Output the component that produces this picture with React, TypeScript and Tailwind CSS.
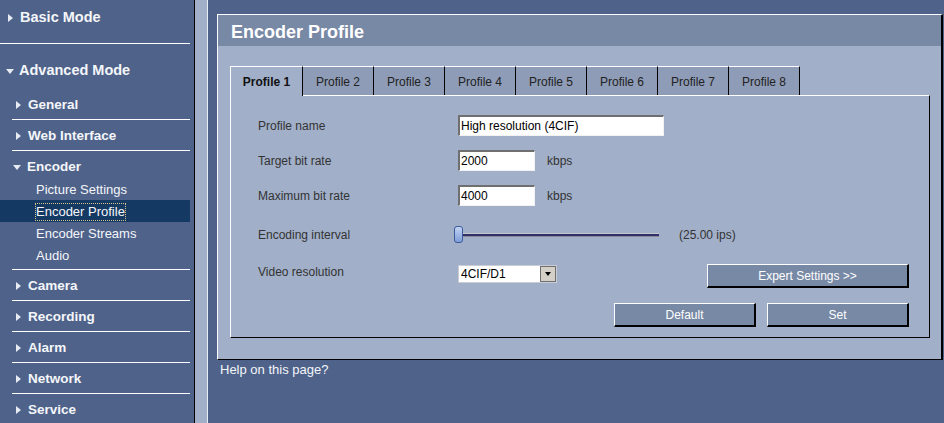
import React from "react";

const categoriesTop = ["General", "Web Interface"];
const categoriesBottom = ["Camera", "Recording", "Alarm", "Network", "Service"];
const encoderItems = ["Picture Settings", "Encoder Profile", "Encoder Streams", "Audio"];
const tabs = ["Profile 1", "Profile 2", "Profile 3", "Profile 4", "Profile 5", "Profile 6", "Profile 7", "Profile 8"];

function RightArrow({ big }: { big?: boolean }) {
  return (
    <span
      className={
        big
          ? "inline-block h-0 w-0 border-y-[4.5px] border-l-[5px] border-y-transparent border-l-[#e6ebf4]"
          : "inline-block h-0 w-0 border-y-[4.5px] border-l-[5px] border-y-transparent border-l-[#e6ebf4]"
      }
    />
  );
}

function DownArrow() {
  return <span className="inline-block h-0 w-0 border-x-[4.5px] border-t-[5px] border-x-transparent border-t-[#e6ebf4]" />;
}

function Category({ label }: { label: string }) {
  return (
    <div className="w-[190px]">
      <div className="flex h-[30px] items-center pt-[2px] pl-[16px]">
        <RightArrow />
        <span className="ml-[7px] text-[13.5px] font-bold text-[#f4f6fa]">{label}</span>
      </div>
      <div className="ml-[12px] h-px bg-white" />
    </div>
  );
}

function Sidebar() {
  return (
    <aside className="w-[195px] shrink-0 border-r border-black bg-[#4f6289]">
      <div className="h-[44px] w-[190px] border-b border-white pt-[9px]">
        <div className="flex h-[18px] items-center pl-[8px]">
          <RightArrow big />
          <span className="ml-[7px] text-[14.5px] font-bold text-[#f4f6fa]">Basic Mode</span>
        </div>
      </div>
      <div className="h-[45px] pt-[18px]">
        <div className="flex h-[18px] items-center pl-[6px]">
          <DownArrow />
          <span className="ml-[5px] text-[14.5px] font-bold text-[#f4f6fa]">Advanced Mode</span>
        </div>
      </div>
      {categoriesTop.map((c) => (
        <Category key={c} label={c} />
      ))}
      <div className="w-[190px]">
        <div className="h-[27px] pt-[7px]">
          <div className="flex h-[18px] items-center pl-[13px]">
            <DownArrow />
            <span className="ml-[6px] text-[13.5px] font-bold text-[#f4f6fa]">Encoder</span>
          </div>
        </div>
        {encoderItems.map((item) => (
          <div
            key={item}
            className={
              item === "Encoder Profile"
                ? "flex h-[22px] items-center bg-[#143962] pt-[1px] pl-[35px]"
                : "flex h-[22px] items-center pt-[1px] pl-[36px]"
            }
          >
            <span
              className={
                item === "Encoder Profile"
                  ? "border border-dotted border-[#d9c48a] leading-[16px] text-[13px] text-[#f4f6fa]"
                  : "text-[13px] text-[#f4f6fa]"
              }
            >
              {item}
            </span>
          </div>
        ))}
        <div className="h-[3px]" />
        <div className="ml-[12px] h-px bg-white" />
      </div>
      {categoriesBottom.map((c) => (
        <Category key={c} label={c} />
      ))}
    </aside>
  );
}

function TextBox({ value, width }: { value: string; width: string }) {
  return (
    <div
      className={`${width} flex h-[21px] items-center border-t-2 border-l-2 border-r border-b border-t-[#6f6f6f] border-l-[#6f6f6f] border-r-[#f2f2f2] border-b-[#f2f2f2] bg-white pl-[1px] text-[12px] text-black`}
    >
      {value}
    </div>
  );
}

function PanelButton({ label, width }: { label: string; width: string }) {
  return (
    <button
      className={`${width} h-[24px] border-t border-l border-r-2 border-b-2 border-t-white border-l-white border-r-black border-b-black bg-[#7889a6] pt-[1px] text-[12px] text-white`}
    >
      {label}
    </button>
  );
}

export default function App() {
  return (
    <div className="flex h-[423px] w-[944px] overflow-hidden bg-[#4f6289] font-['Liberation_Sans',Arial,sans-serif]">
      <Sidebar />
      <div className="w-[13px] shrink-0 border-r border-[#e8ecf4] bg-[#a1afc9]" />
      <main className="flex-1 pl-[9px] pt-[14px]">
        <section className="w-[726px] border-t border-l border-r-2 border-b border-t-white border-l-white border-r-black border-b-black">
          <div className="flex h-[31px] items-center bg-[#7889a6] pt-[3px] pl-[13px] text-[18px] font-bold text-white">
            Encoder Profile
          </div>
          <div className="bg-[#a1afc9] px-[12px] pt-[20px] pb-[21px]">
            <div className="flex">
              {tabs.map((t, i) => (
                <div
                  key={t}
                  className={
                    i === 0
                      ? "relative z-10 -mb-px flex h-[30px] w-[73px] items-center justify-center border-t border-l border-r border-t-white border-l-white border-r-black bg-[#a1afc9] pt-[1px] text-[12px] font-bold text-[#111]"
                      : "flex h-[29px] w-[71px] items-center justify-center border-t border-r border-t-white border-r-black bg-[#8e9cb7] pt-[2px] text-[12px] text-[#222]"
                  }
                >
                  {t}
                </div>
              ))}
            </div>
            <div className="w-[700px] border-t border-l border-r border-b border-t-white border-l-white border-r-black border-b-black pt-[19px] pr-[20px] pb-[10px] pl-[27px] text-[12px] text-[#333]">
              <div className="flex h-[21px] items-center">
                <span className="w-[200px]">Profile name</span>
                <TextBox value="High resolution (4CIF)" width="w-[206px]" />
              </div>
              <div className="mt-[14px] flex h-[21px] items-center">
                <span className="w-[200px]">Target bit rate</span>
                <TextBox value="2000" width="w-[77px]" />
                <span className="ml-[12px]">kbps</span>
              </div>
              <div className="mt-[14px] flex h-[21px] items-center">
                <span className="w-[200px]">Maximum bit rate</span>
                <TextBox value="4000" width="w-[77px]" />
                <span className="ml-[12px]">kbps</span>
              </div>
              <div className="mt-[19px] flex h-[19px] items-center">
                <span className="w-[196px] pt-[1px]">Encoding interval</span>
                <div className="flex w-[205px] items-center">
                  <div className="h-[17px] w-[9px] shrink-0 rounded-[3px] border border-[#3c5a9c] bg-gradient-to-b from-[#c3d4f2] to-[#7f9dd6]" />
                  <div className="flex-1 border-t border-b border-t-[#c9c9c9] border-b-[#8a8a9a]">
                    <div className="h-[2px] bg-[#2e2f6b]" />
                  </div>
                </div>
                <span className="ml-[20px] pt-[1px]">(25.00 ips)</span>
              </div>
              <div className="mt-[20px] flex h-[24px] items-start">
                <span className="w-[200px] pt-[1px] leading-[14px]">Video resolution</span>
                <div className="mt-[1px] flex h-[18px] w-[99px] items-center border border-[#c8ccd4] bg-white text-[12px] text-black">
                  <span className="flex-1 pl-[2px]">4CIF/D1</span>
                  <span className="flex h-[16px] w-[16px] items-center justify-center border border-[#6f6f6f] bg-[#d4d0c8]">
                    <span className="inline-block h-0 w-0 border-x-[3.5px] border-t-[4px] border-x-transparent border-t-black" />
                  </span>
                </div>
                <div className="flex-1" />
                <PanelButton label="Expert Settings >>" width="w-[202px]" />
              </div>
              <div className="mt-[15px] flex justify-end gap-[11px]">
                <PanelButton label="Default" width="w-[142px]" />
                <PanelButton label="Set" width="w-[142px]" />
              </div>
            </div>
          </div>
        </section>
        <p className="ml-[3px] mt-[1px] text-[13px] leading-[18px] text-[#f4f6fa]">Help on this page?</p>
      </main>
    </div>
  );
}
